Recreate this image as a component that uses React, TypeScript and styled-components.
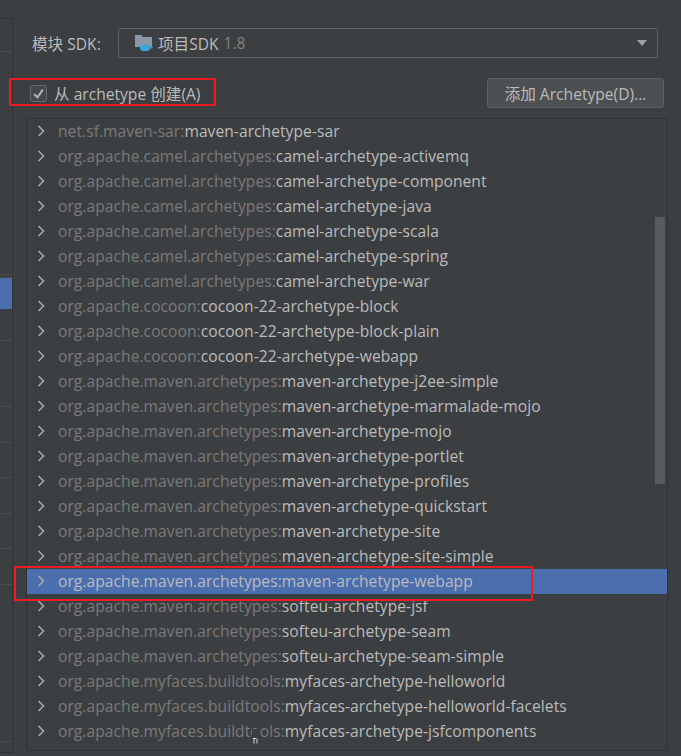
import React from 'react';
import styled, { createGlobalStyle } from 'styled-components';

const Global = createGlobalStyle`
  html, body { margin: 0; padding: 0; background: #3c3f41; }
  #root { width: 681px; height: 756px; overflow: hidden; }
`;

const Page = styled.div`
  position: relative;
  width: 681px;
  height: 756px;
  display: flex;
  background: #3c3f41;
  font-family: "Open Sans", "Noto Sans CJK SC", sans-serif;
  font-size: 15.6px;
  color: #bbbbbb;
  overflow: hidden;
`;

const SidePanel = styled.div`
  width: 12px;
  height: 733px;
  margin-top: 18px;
  border-top: 1px solid #323232;
  border-right: 1px solid #323232;
  border-bottom: 1px solid #323232;
  box-sizing: content-box;
  flex: none;
  display: flex;
  flex-direction: column;
`;

const SideRow = styled.div<{ $h: number; $selected?: boolean }>`
  height: ${p => p.$h}px;
  flex: none;
  box-sizing: border-box;
  background: ${p => (p.$selected ? '#4b6eaf' : 'transparent')};
  border-bottom: ${p => (p.$selected ? '0' : '1px solid #4a4c4e')};
`;

const Main = styled.div`
  margin-left: 13px;
  width: 642px;
  flex: none;
  display: flex;
  flex-direction: column;
`;

const SdkRow = styled.div`
  display: flex;
  align-items: center;
  height: 30px;
  margin-top: 28px;
  margin-left: 6px;
`;

const SdkLabel = styled.span`
  width: 86px;
  flex: none;
  white-space: pre;
`;

const Combo = styled.div`
  width: 540px;
  height: 30px;
  box-sizing: border-box;
  flex: none;
  border: 1px solid #646464;
  border-radius: 3px;
  display: flex;
  align-items: center;
  padding: 0 10px 0 15px;
  gap: 4px;
`;

const Version = styled.span`
  color: #808080;
  margin-left: 1px;
`;

const Caret = styled.span`
  margin-left: auto;
  width: 0;
  height: 0;
  border-left: 5.5px solid transparent;
  border-right: 5.5px solid transparent;
  border-top: 6px solid #a0a2a4;
`;

const ArchetypeRow = styled.div`
  display: flex;
  align-items: center;
  justify-content: space-between;
  height: 30px;
  margin-top: 20px;
  margin-left: 4px;
  margin-right: 4px;
`;

const CheckLabel = styled.label`
  display: flex;
  align-items: center;
  gap: 7px;
`;

const CheckBox = styled.span`
  width: 17px;
  height: 17px;
  box-sizing: border-box;
  border: 1px solid #6b6b6b;
  border-radius: 3px;
  background: #43494a;
  display: flex;
  align-items: center;
  justify-content: center;
`;

const AddButton = styled.button`
  width: 177px;
  height: 30px;
  box-sizing: border-box;
  border: 1px solid #5e6060;
  border-radius: 3px;
  background: #4c5052;
  color: #bbbbbb;
  font: inherit;
  padding: 0;
`;

const ListFrame = styled.div`
  position: relative;
  margin-top: 10px;
  width: 642px;
  height: 633px;
  box-sizing: border-box;
  border: 1px solid #323232;
  display: flex;
  flex-direction: column;
`;

const Row = styled.div<{ $selected?: boolean }>`
  height: 25px;
  box-sizing: border-box;
  padding: 0 0 2px 9px;
  flex: none;
  display: flex;
  align-items: center;
  background: ${p => (p.$selected ? '#4b6eaf' : 'transparent')};
  white-space: pre;
  letter-spacing: 0.05px;
`;

const Chevron = styled.svg`
  width: 10px;
  height: 12px;
  margin-right: 12px;
  flex: none;
`;

const Group = styled.span<{ $selected?: boolean }>`
  color: ${p => (p.$selected ? '#bbbbbb' : '#7a7a7a')};
`;

const Artifact = styled.span``;

const ScrollThumb = styled.div`
  position: absolute;
  left: 628px;
  top: 98px;
  width: 10px;
  height: 267px;
  background: #595b5d;
`;

const Highlight = styled.div<{ $x: number; $y: number; $w: number; $h: number }>`
  position: absolute;
  left: ${p => p.$x}px;
  top: ${p => p.$y}px;
  width: ${p => p.$w}px;
  height: ${p => p.$h}px;
  box-sizing: border-box;
  border: 2px solid #ed1c24;
  pointer-events: none;
`;

const CursorMark = styled.svg`
  position: absolute;
  left: 250px;
  top: 729px;
  width: 10px;
  height: 15px;
`;

const rows: [string, string][] = [
  ['net.sf.maven-sar:', 'maven-archetype-sar'],
  ['org.apache.camel.archetypes:', 'camel-archetype-activemq'],
  ['org.apache.camel.archetypes:', 'camel-archetype-component'],
  ['org.apache.camel.archetypes:', 'camel-archetype-java'],
  ['org.apache.camel.archetypes:', 'camel-archetype-scala'],
  ['org.apache.camel.archetypes:', 'camel-archetype-spring'],
  ['org.apache.camel.archetypes:', 'camel-archetype-war'],
  ['org.apache.cocoon:', 'cocoon-22-archetype-block'],
  ['org.apache.cocoon:', 'cocoon-22-archetype-block-plain'],
  ['org.apache.cocoon:', 'cocoon-22-archetype-webapp'],
  ['org.apache.maven.archetypes:', 'maven-archetype-j2ee-simple'],
  ['org.apache.maven.archetypes:', 'maven-archetype-marmalade-mojo'],
  ['org.apache.maven.archetypes:', 'maven-archetype-mojo'],
  ['org.apache.maven.archetypes:', 'maven-archetype-portlet'],
  ['org.apache.maven.archetypes:', 'maven-archetype-profiles'],
  ['org.apache.maven.archetypes:', 'maven-archetype-quickstart'],
  ['org.apache.maven.archetypes:', 'maven-archetype-site'],
  ['org.apache.maven.archetypes:', 'maven-archetype-site-simple'],
  ['org.apache.maven.archetypes:', 'maven-archetype-webapp'],
  ['org.apache.maven.archetypes:', 'softeu-archetype-jsf'],
  ['org.apache.maven.archetypes:', 'softeu-archetype-seam'],
  ['org.apache.maven.archetypes:', 'softeu-archetype-seam-simple'],
  ['org.apache.myfaces.buildtools:', 'myfaces-archetype-helloworld'],
  ['org.apache.myfaces.buildtools:', 'myfaces-archetype-helloworld-facelets'],
  ['org.apache.myfaces.buildtools:', 'myfaces-archetype-jsfcomponents'],
];

const sideRows = [33, 223, 3, 31, 32, 66, 36, 35, 36, 35, 36, 157];

export default function App() {
  return (
    <Page>
      <Global />
      <SidePanel>
        {sideRows.map((h, i) => (
          <SideRow key={i} $h={h} $selected={i === 3} />
        ))}
      </SidePanel>
      <Main>
        <SdkRow>
          <SdkLabel>模块 SDK:</SdkLabel>
          <Combo>
            <svg width="20" height="18" viewBox="0 0 20 18">
              <path d="M1 1h6l2 2h9v10H1z" fill="#8a98a5" />
              <path d="M6 11h10v3a3 3 0 0 1-3 3H9a3 3 0 0 1-3-3z" fill="#3aa6dc" />
              <path d="M16 12h2v2h-2z" fill="none" stroke="#3aa6dc" />
            </svg>
            <span>项目SDK</span>
            <Version>1.8</Version>
            <Caret />
          </Combo>
        </SdkRow>
        <ArchetypeRow>
          <CheckLabel>
            <CheckBox>
              <svg width="13" height="13" viewBox="0 0 12 12">
                <path d="M2 6.500l3 3 5-7" fill="none" stroke="#b0b1b2" strokeWidth="2" />
              </svg>
            </CheckBox>
            <span>从 archetype 创建(A)</span>
          </CheckLabel>
          <AddButton>添加 Archetype(D)...</AddButton>
        </ArchetypeRow>
        <ListFrame>
          {rows.map(([g, a], i) => (
            <Row key={i} $selected={i === 18}>
              <Chevron viewBox="0 0 10 12">
                <path d="M2.500 1L7.500 6l-5 5" fill="none" stroke="#a9abad" strokeWidth="1.500" />
              </Chevron>
              <Group $selected={i === 18}>{g}</Group>
              <Artifact>{a}</Artifact>
            </Row>
          ))}
          <ScrollThumb />
        </ListFrame>
      </Main>
      <Highlight $x={9} $y={78} $w={207} $h={28} />
      <Highlight $x={14} $y={566} $w={519} $h={35} />
      <CursorMark viewBox="0 0 10 15">
        <rect x="2" y="0" width="7" height="9" fill="#3c3f41" />
        <path d="M3 9.500h3.500M4 9.500v5M7 10v4.500" fill="none" stroke="#d8d8d8" strokeWidth="1" />
      </CursorMark>
    </Page>
  );
}
